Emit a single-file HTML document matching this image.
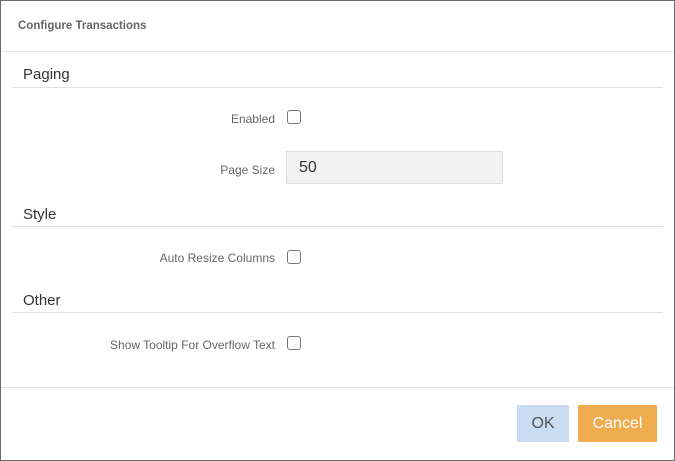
<!DOCTYPE html>
<html><head><style>
body{margin:0;width:675px;height:461px;overflow:hidden;background:#fff;font-family:"Liberation Sans",sans-serif;}
.f{position:absolute;left:0;top:0;width:673px;height:459px;border:1px solid #6b6b6b;}
.a{position:absolute;}
.h{left:12px;width:651px;height:1px;background:#e0e0e0;}
.sec{left:23px;font-size:15px;color:#333;}
.lab{right:400px;font-size:12px;color:#666;text-align:right;white-space:nowrap;}
.cb{left:287px;width:12px;height:12px;border:1px solid #777;border-radius:3px;}
</style></head><body>
<div class="f"></div>
<div class="a" style="left:18px;top:20px;font-size:11.5px;font-weight:bold;color:#666">Configure Transactions</div>
<div class="a" style="left:1px;top:51px;width:673px;height:1px;background:#e8e8e8"></div>
<div class="a sec" style="top:66px">Paging</div>
<div class="a h" style="top:87px"></div>
<div class="a lab" style="top:112px">Enabled</div>
<div class="a cb" style="top:110px"></div>
<div class="a lab" style="top:163px">Page Size</div>
<div class="a" style="left:286px;top:151px;width:215px;height:31px;background:#f2f2f2;border:1px solid #dedede;"></div>
<div class="a" style="left:299px;top:159px;font-size:16px;color:#333">50</div>
<div class="a sec" style="top:206px">Style</div>
<div class="a h" style="top:226px"></div>
<div class="a lab" style="top:251px">Auto Resize Columns</div>
<div class="a cb" style="top:250px"></div>
<div class="a sec" style="top:292px">Other</div>
<div class="a h" style="top:312px"></div>
<div class="a lab" style="top:338px">Show Tooltip For Overflow Text</div>
<div class="a cb" style="top:336px"></div>
<div class="a" style="left:1px;top:387px;width:673px;height:1px;background:#e0e0e0"></div>
<div class="a" style="left:517px;top:405px;width:52px;height:37px;background:#c9dcf2;color:#555;font-size:16px;line-height:37px;text-align:center">OK</div>
<div class="a" style="left:578px;top:405px;width:79px;height:37px;background:#efac4e;color:#fff;font-size:16px;line-height:37px;text-align:center">Cancel</div>
</body></html>
